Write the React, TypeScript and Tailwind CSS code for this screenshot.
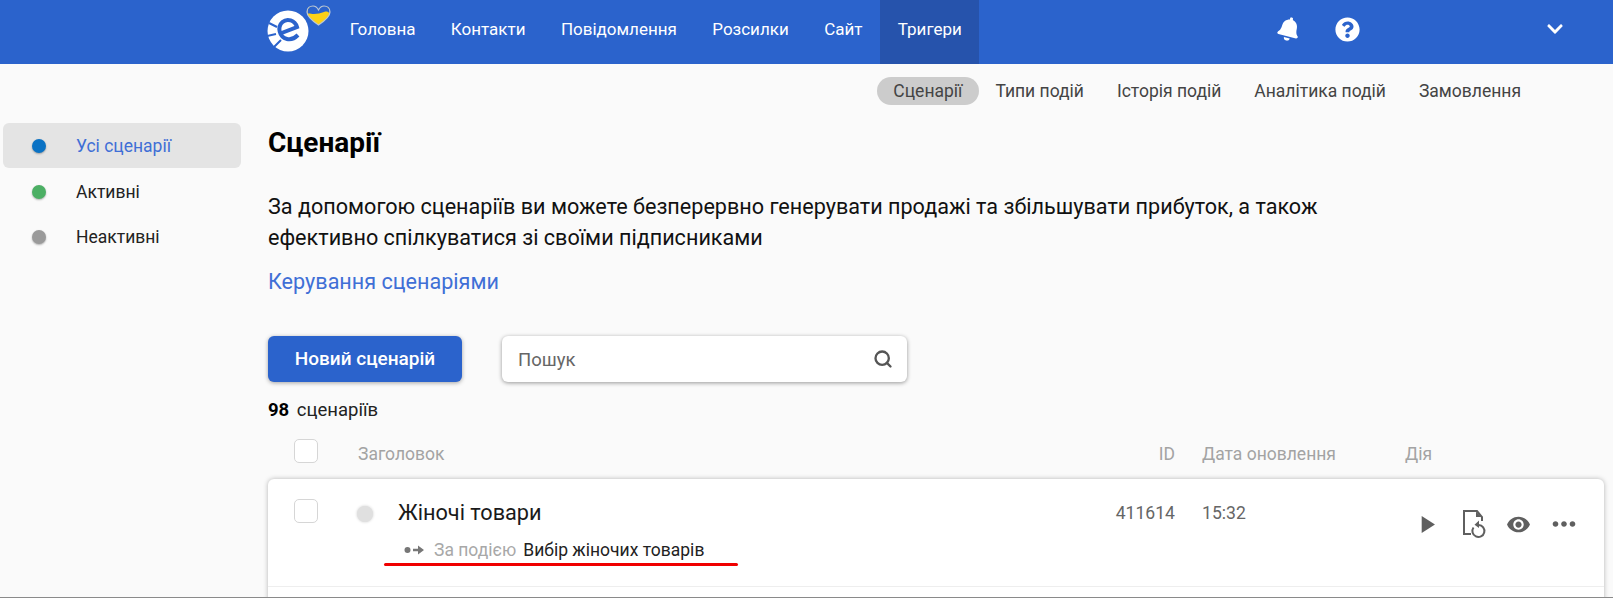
import { FaBell, FaQuestionCircle, FaChevronDown } from 'react-icons/fa'
import { MdVisibility, MdMoreHoriz, MdPlayArrow } from 'react-icons/md'
import { Search } from 'lucide-react'

const navItems = ['Головна', 'Контакти', 'Повідомлення', 'Розсилки', 'Сайт']
const subNav = ['Типи подій', 'Історія подій', 'Аналітика подій', 'Замовлення']

function Logo() {
  return (
    <svg width="64" height="52" viewBox="0 0 64 52" className="shrink-0">
      <circle cx="21" cy="28" r="20.5" fill="#fff" />
      <path d="M2 20 L10 24 M0 33 L9 31 M7 44 L14 37" fill="none" stroke="#2b63cc" strokeWidth="2" />
      <path d="M12 31 L30 24 C28 17 20 15 15.5 19 C10 24 12 34 20 36 C24 37 28 35 31 32" fill="none" stroke="#2b63cc" strokeWidth="4" />
      <path d="M51.5 22 C44 17 40 13 40 9 C40 5 43 3 46 3 C49 3 50.5 5 51.5 7 C52.5 5 54 3 57 3 C60 3 63 5 63 9 C63 13 59 17 51.5 22 Z" fill="#fcd116" />
      <path d="M40.5 11 C41 10 44 11 47 11 C50 11 54 10 57 9 C60 8 61 9 62.5 10 C63 5 60 3 57 3 C54 3 52.5 5 51.5 7 C50.5 5 49 3 46 3 C43 3 40 5 40.5 11 Z" fill="#2b63cc" />
      <path d="M51.5 22 C44 17 40 13 40 9 C40 5 43 3 46 3 C49 3 50.5 5 51.5 7 C52.5 5 54 3 57 3 C60 3 63 5 63 9 C63 13 59 17 51.5 22 Z" fill="none" stroke="#b9c6d8" strokeWidth="1.2" />
    </svg>
  )
}

function Header() {
  return (
    <header className="flex h-16 shrink-0 items-stretch bg-[#2b63cc] pl-[267px] pr-[49px] text-white">
      <div className="flex items-start pt-[3px]"><Logo /></div>
      <nav className="ml-[1px] flex text-[17px]">
        {navItems.map(item => (
          <a key={item} className="flex items-center px-[17.7px] pb-1">{item}</a>
        ))}
        <a className="flex items-center bg-[#2653ac] px-[17.7px] pb-1">Тригери</a>
      </nav>
      <div className="ml-auto flex items-center pb-[6px]">
        <FaBell className="rotate-[14deg] text-[24px]" />
        <FaQuestionCircle className="ml-[34px] text-[25px]" />
        <FaChevronDown className="ml-[186px] text-[18px]" />
      </div>
    </header>
  )
}

function SideItem({ label, dot, active }: { label: string; dot: string; active?: boolean }) {
  return (
    <div className={`flex h-[45px] items-center rounded-md pl-[29px] text-[17.5px] ${active ? 'bg-[#e4e4e4] text-[#3f6fd6]' : 'text-[#222]'}`}>
      <span className={`h-[14px] w-[14px] rounded-full shadow-[0_1px_2px_rgba(0,0,0,0.3)] ${dot}`} />
      <span className="ml-[30px] pt-[2px]">{label}</span>
    </div>
  )
}

function DocRefresh() {
  return (
    <svg width="25" height="29" viewBox="0 0 25 29" fill="none" stroke="#5f5f5f" strokeWidth="2">
      <path d="M8 24 H1 V1 H14 L19 7 V11" />
      <path d="M13 1.5 V7 H18.5 Z" fill="#5f5f5f" stroke="none" />
      <path d="M10.5 17.5 A6 6 0 1 0 15.7 15" />
      <path d="M16 10.5 L11.5 14.7 L16 18 Z" fill="#5f5f5f" stroke="none" />
    </svg>
  )
}

function Checkbox() {
  return <span className="block h-6 w-6 shrink-0 rounded-[5px] border border-[#d6d6d6] bg-white" />
}

export default function App() {
  return (
    <div className="flex h-[598px] flex-col overflow-hidden border-b border-[#8a8a8a] bg-[#fafafa] font-['Roboto',sans-serif] text-[#111]">
      <Header />
      <div className="flex justify-end pr-[92px] pt-[13px] text-[17.5px] text-[#444]">
        <span className="flex h-7 w-[102px] items-center justify-center rounded-full bg-[#cccccc] pt-[1px]">Сценарії</span>
        <div className="ml-[16.5px] flex h-7 items-center gap-[33px] pt-[1px]">
          {subNav.map(item => <span key={item}>{item}</span>)}
        </div>
      </div>
      <div className="flex flex-1">
        <aside className="w-[268px] shrink-0 pl-[3px] pr-[27px] pt-[18px]">
          <SideItem label="Усі сценарії" dot="bg-[#0a72c4]" active />
          <div className="mt-[1px]"><SideItem label="Активні" dot="bg-[#4caf64]" /></div>
          <SideItem label="Неактивні" dot="bg-[#9a9a9a]" />
        </aside>
        <main className="flex-1 pr-[9px]">
          <h1 className="mt-[21px] text-[28px] font-bold leading-[34px] text-black">Сценарії</h1>
          <p className="mt-[31px] text-[21.6px] leading-[31px] text-[#111]">
            За допомогою сценаріїв ви можете безперервно генерувати продажі та збільшувати прибуток, а також<br />
            ефективно спілкуватися зі своїми підписниками
          </p>
          <a className="mt-[11px] block text-[21.6px] leading-[35px] text-[#3f6fd6]">Керування сценаріями</a>
          <div className="mt-[37px] flex gap-10">
            <button className="h-[46px] w-[194px] rounded-md bg-[#2b63cc] pt-[1px] text-[19px] font-medium text-white shadow-[0_1px_4px_rgba(0,0,0,0.35)]">Новий сценарій</button>
            <div className="flex h-[46px] w-[405px] items-center rounded-md bg-white pl-[16px] pr-[14px] text-[18.5px] text-[#666] shadow-[0_1px_4px_rgba(0,0,0,0.4)]">
              <span className="pt-[3px]">Пошук</span>
              <Search className="ml-auto h-5 w-5 text-[#555]" strokeWidth={2.8} />
            </div>
          </div>
          <div className="mt-4 text-[18.5px] leading-6 text-[#222]"><b className="font-bold text-black">98</b> <span className="ml-[3px]">сценаріїв</span></div>
          <div className="mt-[17px] flex h-6 items-center pl-[26px] text-[17.5px] text-[#a3a3a3]">
            <Checkbox />
            <span className="ml-10 pt-[6px]">Заголовок</span>
            <span className="ml-auto pt-[6px]">ID</span>
            <span className="ml-[27px] w-[203px] pt-[6px]">Дата оновлення</span>
            <span className="w-[199px] pt-[6px]">Дія</span>
          </div>
          <section className="mt-[16px] rounded-t-md bg-white shadow-[0_0_5px_rgba(0,0,0,0.28)]">
            <div className="flex h-[108px] border-b border-[#eeeeee] pl-[26px]">
              <div className="pt-5"><Checkbox /></div>
              <span className="ml-[39px] mt-[27px] h-4 w-4 rounded-full bg-[#e0e0e0] shadow-[0_0_3px_rgba(0,0,0,0.2)]" />
              <div className="relative ml-[25px] pt-[17px]">
                <div className="text-[21.7px] leading-[34px] text-[#1a1a1a]">Жіночі товари</div>
                <div className="mt-[8px] flex items-center pl-[6px] text-[17.5px] leading-6">
                  <svg width="21" height="12" viewBox="0 0 21 12" fill="#777">
                    <circle cx="3.5" cy="6" r="3" />
                    <path d="M9 4.8 H14 V1.5 L20 6 L14 10.5 V7.2 H9 Z" />
                  </svg>
                  <span className="ml-[9px] text-[#a8a8a8]">За подією</span>
                  <span className="ml-[7px] text-[#222]">Вибір жіночих товарів</span>
                </div>
                <span className="absolute left-[-14px] top-[84px] h-[3px] w-[354px] rounded-full bg-[#f00000]" />
              </div>
              <span className="ml-auto pt-[17px] text-[17.6px] leading-[34px] text-[#666]">411614</span>
              <span className="ml-[27px] w-[203px] pt-[17px] text-[17.6px] leading-[34px] text-[#666]">15:32</span>
              <div className="mt-[30px] flex h-[30px] w-[199px] items-center text-[#5f5f5f]">
                <MdPlayArrow className="ml-[7px] shrink-0 text-[29px]" />
                <span className="ml-[22px]"><DocRefresh /></span>
                <MdVisibility className="ml-[18px] shrink-0 text-[25px]" />
                <MdMoreHoriz className="ml-[16px] shrink-0 text-[34px]" />
              </div>
            </div>
            <div className="h-10" />
          </section>
        </main>
      </div>
    </div>
  )
}
